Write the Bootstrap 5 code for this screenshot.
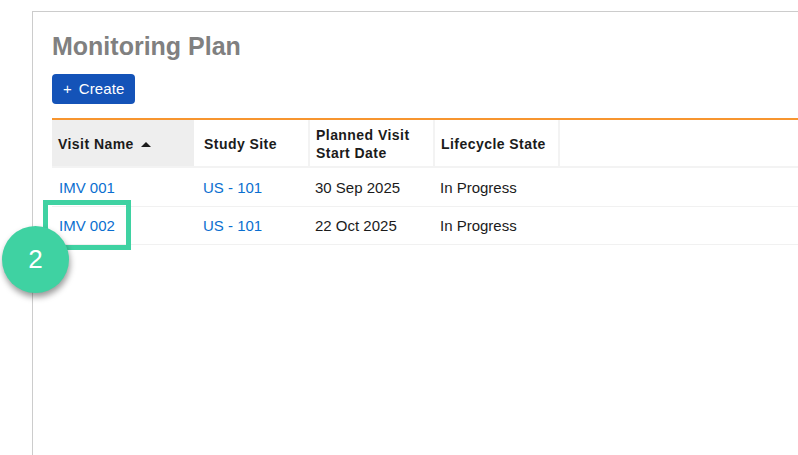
<!DOCTYPE html>
<html lang="en">
  <head>
    <meta charset="UTF-8" />
    <meta name="viewport" content="width=device-width, initial-scale=1.0" />
    <title>Monitoring Plan</title>
    <link
      href="https://cdn.jsdelivr.net/npm/bootstrap@5.3.3/dist/css/bootstrap.min.css"
      rel="stylesheet"
    />
    <style>
      html, body {
        height: 455px;
        overflow: hidden;
      }
      body {
        background-color: #ffffff;
        font-family: "Liberation Sans", Arial, sans-serif;
        position: relative;
        padding: 11px 0 0 32px;
      }
      .plan-panel {
        height: 444px;
        border-left: 1px solid #cccccc;
        border-top: 1px solid #cccccc;
        padding: 19px 0 0 19px;
      }
      .plan-title {
        font-size: 25px;
        line-height: 30px;
        font-weight: 700;
        color: #808080;
        margin: 0 0 13px;
      }
      .create-btn {
        background-color: #1453b8;
        color: #ffffff;
        border: none;
        border-radius: 4px;
        font-size: 15px;
        line-height: 30px;
        height: 30px;
        width: 83px;
        padding: 0 0 0 11px;
        display: block;
        text-align: left;
      }
      .create-label {
        margin-left: 7px;
        letter-spacing: 0.1px;
      }
      .plan-table {
        margin-top: 14px;
        border-top: 2px solid #f7952f;
        width: 746px;
      }
      .plan-head {
        display: flex;
        height: 48px;
        margin-bottom: 1px;
        border-bottom: 2px solid #f3f3f3;
      }
      .plan-th {
        display: flex;
        align-items: center;
        font-size: 14px;
        line-height: 18px;
        font-weight: 700;
        color: #1b1b1b;
        letter-spacing: 0.45px;
        padding-left: 6px;
        padding-top: 2px;
        border-right: 2px solid #f3f3f3;
      }
      .plan-th.sorted {
        background-color: #eeeeee;
        border-right-color: #ffffff;
      }
      .sort-arrow {
        margin-left: 7px;
      }
      .plan-row {
        display: flex;
        height: 38px;
        align-items: center;
        border-bottom: 1px solid #f1f1f1;
        font-size: 15px;
        color: #1b1b1b;
        padding-top: 1px;
      }
      .plan-td {
        padding-left: 7px;
      }
      .plan-td.plain-cell {
        padding-left: 5px;
      }
      .plan-td a {
        color: #0b6fd0;
        text-decoration: none;
      }
      .w-name { width: 144px; }
      .w-site { width: 114px; }
      .w-date { width: 125px; }
      .w-state { width: 125px; }
      .callout-box {
        position: absolute;
        left: 43px;
        top: 200px;
        width: 88px;
        height: 50px;
        border: 5px solid #3fd2a2;
      }
      .callout-num {
        position: absolute;
        left: 2px;
        top: 226px;
        width: 67px;
        height: 67px;
        border-radius: 50%;
        background-color: #3fd2a2;
        color: #ffffff;
        font-size: 26px;
        box-shadow: 1px 4px 6px rgba(0, 0, 0, 0.4);
      }
    </style>
  </head>
  <body>
    <div class="plan-panel">
      <h1 class="plan-title">Monitoring Plan</h1>
      <button class="create-btn" type="button">+<span class="create-label">Create</span></button>
      <div class="plan-table">
        <div class="plan-head">
          <div class="plan-th sorted w-name">
            Visit Name
            <svg class="sort-arrow" width="10" height="5" viewBox="0 0 10 5"><path d="M5 0 10 5H0z" fill="#1b1b1b" /></svg>
          </div>
          <div class="plan-th w-site ps-2">Study Site</div>
          <div class="plan-th w-date">Planned Visit<br />Start Date</div>
          <div class="plan-th w-state">Lifecycle State</div>
        </div>
        <div class="plan-row">
          <div class="plan-td w-name"><a href="#">IMV 001</a></div>
          <div class="plan-td w-site"><a href="#">US - 101</a></div>
          <div class="plan-td plain-cell w-date">30 Sep 2025</div>
          <div class="plan-td plain-cell w-state">In Progress</div>
        </div>
        <div class="plan-row">
          <div class="plan-td w-name"><a href="#">IMV 002</a></div>
          <div class="plan-td w-site"><a href="#">US - 101</a></div>
          <div class="plan-td plain-cell w-date">22 Oct 2025</div>
          <div class="plan-td plain-cell w-state">In Progress</div>
        </div>
      </div>
    </div>
    <div class="callout-box"></div>
    <div class="callout-num d-flex align-items-center justify-content-center">2</div>
    <script src="https://cdn.jsdelivr.net/npm/bootstrap@5.3.3/dist/js/bootstrap.bundle.min.js"></script>
  </body>
</html>
